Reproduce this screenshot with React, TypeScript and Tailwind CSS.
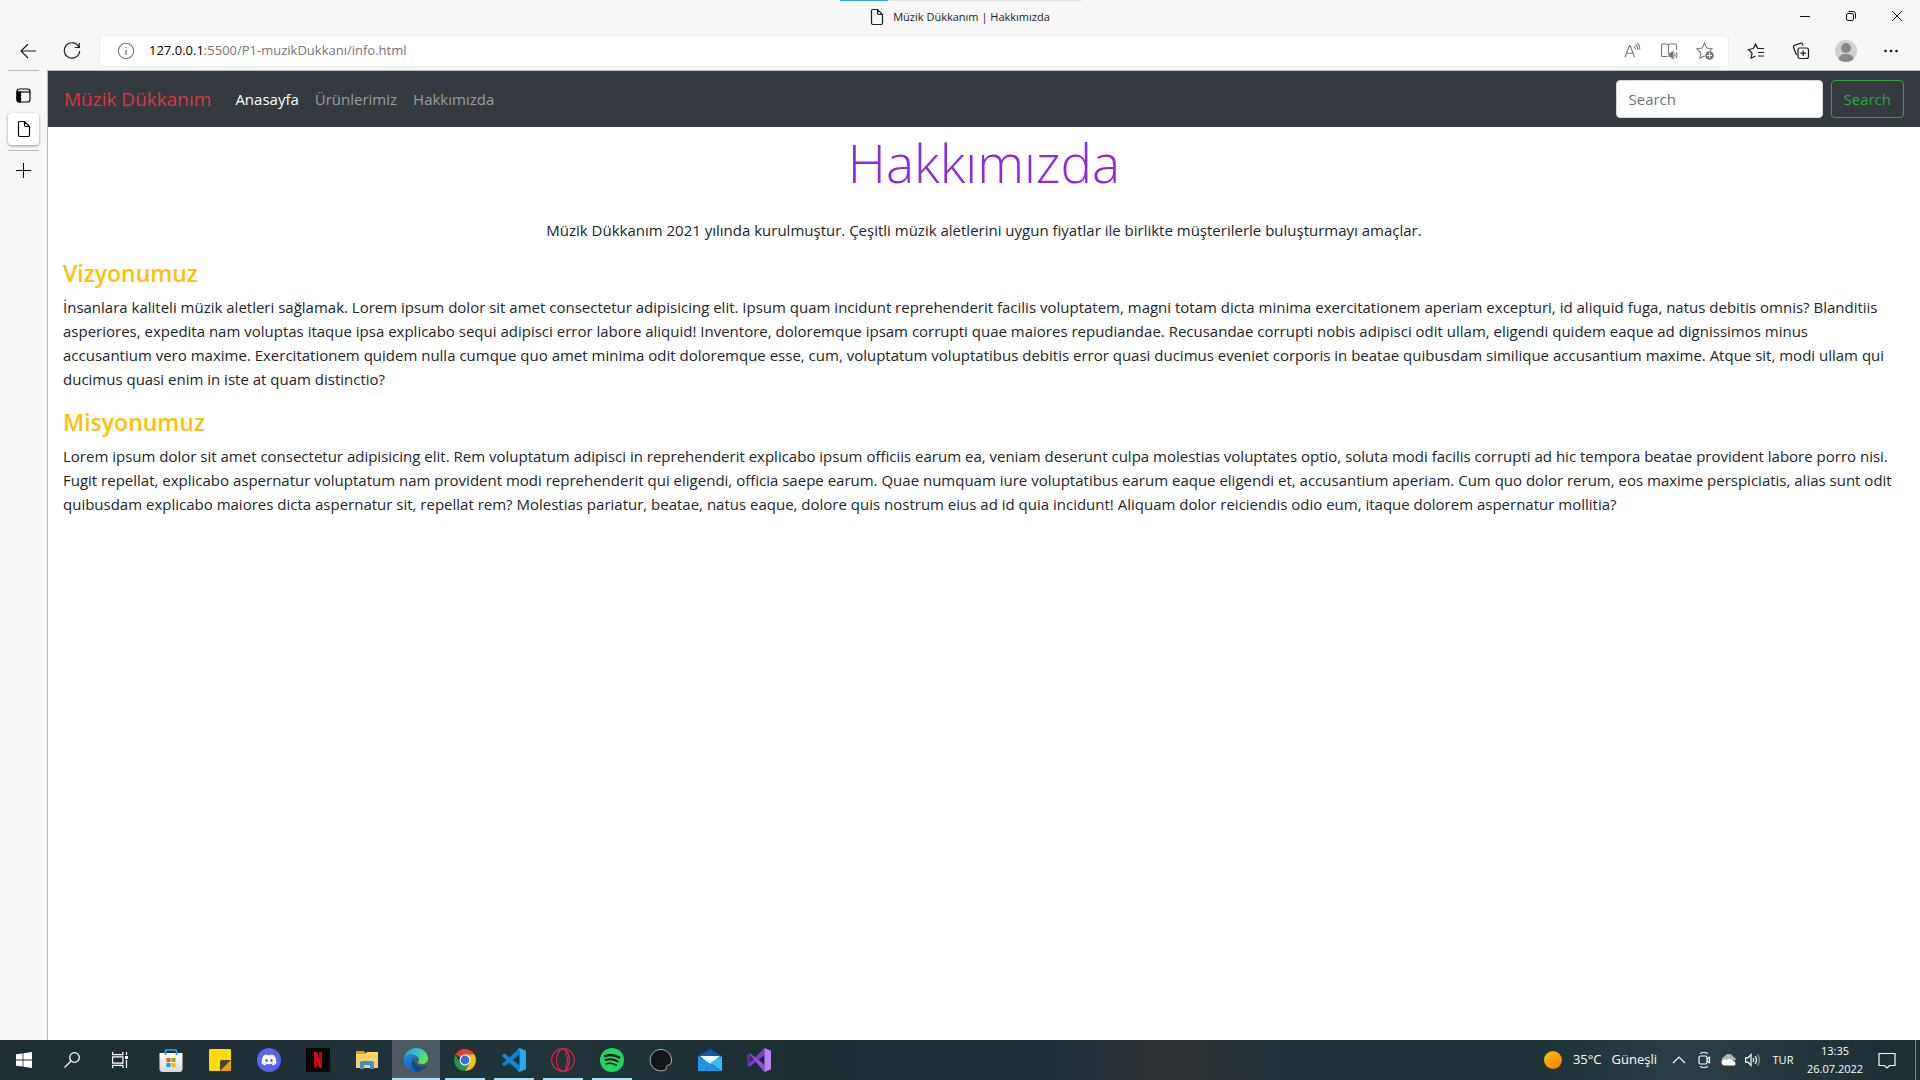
import type { ReactNode } from 'react';
import { FaDiscord } from 'react-icons/fa';

const stroke = { fill: 'none', stroke: 'currentColor', strokeWidth: 1.2 } as const;

function FileIcon() {
  return (
    <svg width="14" height="18" viewBox="0 0 14 18" {...stroke} aria-hidden="true">
      <path d="M3 1.5h4.5l5 5v8.500a1.500 1.500 0 0 1-1.500 1.500H3A1.500 1.500 0 0 1 1.500 15V3A1.500 1.500 0 0 1 3 1.500zM7.500 1.500V5A1.500 1.500 0 0 0 9 6.500h3.500" />
    </svg>
  );
}

function IconButton({ label, className, children }: { label: string; className: string; children?: ReactNode }) {
  return (
    <button type="button" aria-label={label} className={`flex shrink-0 items-center justify-center ${className}`}>
      {children}
    </button>
  );
}

function TitleBar() {
  return (
    <header className="grid h-9 grid-cols-[1fr_auto_1fr] bg-[#f7f7f7]">
      <div />
      <div className="flex w-[241px] flex-col">
        <div className="flex h-px bg-[#e3e3e3]">
          <div className="w-12 bg-[#2ba7c9]" />
        </div>
        <div className="flex h-8 items-center justify-center gap-[9px] whitespace-nowrap text-[11px] text-[#1b1b1b]">
          <FileIcon />
          <span>Müzik Dükkanım | Hakkımızda</span>
        </div>
      </div>
      <div className="flex h-8 justify-end">
        <IconButton label="Simge durumuna küçült" className="w-[46px]">
          <svg width="12" height="12" viewBox="0 0 12 12" fill="none" stroke="#111"><path d="M1 6.500h10" /></svg>
        </IconButton>
        <IconButton label="Önceki boyut" className="w-[46px]">
          <svg width="12" height="12" viewBox="0 0 12 12" fill="none" stroke="#111">
            <rect x="1.500" y="3.500" width="7" height="7" rx="1.500" />
            <path d="M3.500 1.500H8a2.500 2.500 0 0 1 2.500 2.500v4.500" />
          </svg>
        </IconButton>
        <IconButton label="Kapat" className="w-[46px]">
          <svg width="12" height="12" viewBox="0 0 12 12" fill="none" stroke="#111"><path d="M1 1l10 10M11 1L1 11" /></svg>
        </IconButton>
      </div>
    </header>
  );
}

function AddressBar() {
  return (
    <div className="flex h-[34px] items-start bg-[#f7f7f7]">
      <IconButton label="Geri" className="ml-1 h-[30px] w-12 text-[#1b1b1b]">
        <svg width="18" height="16" viewBox="0 0 18 16" {...stroke}><path d="M9 1L2 8l7 7M2 8h15" /></svg>
      </IconButton>
      <IconButton label="Yenile" className="h-[30px] w-10 text-[#1b1b1b]">
        <svg width="18" height="18" viewBox="0 0 18 18" {...stroke}><path d="M16 5.200A7.700 7.700 0 1 0 16.700 9M16.300 1v4.500h-4.500" /></svg>
      </IconButton>
      <div className="ml-2 flex h-[30px] flex-1 items-center rounded bg-white pl-[17px] shadow-[0_0_2px_rgba(0,0,0,0.12)]">
        <svg width="18" height="18" viewBox="0 0 18 18" fill="none" stroke="#767676" aria-hidden="true">
          <circle cx="9" cy="9" r="7.700" strokeWidth="1.100" />
          <path d="M9 8v5M9 5v1.300" strokeWidth="1.300" />
        </svg>
        <a href="#adres" className="ml-3.5 flex-1 text-[13px] whitespace-nowrap text-[#767676]">
          <span className="text-black">127.0.0.1</span>:5500/P1-muzikDukkanı/info.html
        </a>
        <IconButton label="Sesli oku" className="h-[30px] w-9 text-[#767676]">
          <svg width="18" height="18" viewBox="0 0 18 18" {...stroke} strokeWidth={1.1}>
            <path d="M1 15L5.500 3.500h.6l4.500 11.500M2.500 11.200h6.700M9.800 4.500q1.500 1 1.500 3M11.300 2.800q2.500 1.500 2.500 5M12.800 1q3 2 3 6.500" />
          </svg>
        </IconButton>
        <IconButton label="Okuyucu" className="h-[30px] w-9 text-[#767676]">
          <svg width="18" height="18" viewBox="0 0 18 18" {...stroke} strokeWidth={1.1}>
            <path d="M8.500 3.500q0-1.500-1.500-1.500H2.500q-1 0-1 1v10.500q0 1 1 1H7.500M8.500 3.500q0-1.500 1.500-1.500h5.500q1 0 1 1v5M8.500 3.500v8" />
            <path d="M9 11.500h1.500l2.500-2v7l-2.500-2H9z" fill="currentColor" />
            <path d="M14.500 11.500q1 1.500 0 3M16 10q2 3 0 6" />
          </svg>
        </IconButton>
        <IconButton label="Sık kullanılanlara ekle" className="mr-[5px] h-[30px] w-9 text-[#767676]">
          <svg width="20" height="20" viewBox="0 0 20 20" {...stroke} strokeWidth={1.1}>
            <path d="M9.500 15l-4.500 2 .8-5.200L2 7.800l5.200-.8L9.500 2l2.300 5 5.200.8-2.200 2" />
            <circle cx="14.500" cy="14.500" r="4.300" fill="currentColor" stroke="none" />
            <path d="M14.500 12v5M12 14.500h5" stroke="white" />
          </svg>
        </IconButton>
      </div>
      <IconButton label="Sık kullanılanlar" className="ml-[5px] h-[30px] w-[45px] text-[#1b1b1b]">
        <svg width="18" height="18" viewBox="0 0 18 18" {...stroke}>
          <path d="M10.500 6L8.500 2 6.300 6.500 1.500 7.500 5 11l-.8 5.200L8.500 14M8.500 2l2.300 4.500H17M11 10.500h6M11 14h6" />
        </svg>
      </IconButton>
      <IconButton label="Koleksiyonlar" className="h-[30px] w-[45px] text-[#1b1b1b]">
        <svg width="18" height="18" viewBox="0 0 18 18" {...stroke}>
          <rect x="6" y="6" width="10.500" height="10.500" rx="2" />
          <path d="M11.200 8.500v5.500M8.500 11.200H14M4.500 13L1.500 5.500q-.4-1.500 1-2.100L8.500 1.200q1.500-.4 2 1l.6 1.500" />
        </svg>
      </IconButton>
      <IconButton label="Profil" className="h-[30px] w-[45px]">
        <svg width="22" height="22" viewBox="0 0 22 22">
          <circle cx="11" cy="11" r="11" fill="#d2d0ce" />
          <circle cx="11" cy="8" r="5" fill="#8a8886" />
          <path d="M3.500 19q1-5 7.500-5t7.500 5Q15.500 22 11 22t-7.500-3z" fill="#8a8886" />
        </svg>
      </IconButton>
      <IconButton label="Ayarlar ve daha fazlası" className="mr-1.5 h-[30px] w-[46px]">
        <svg width="16" height="4" viewBox="0 0 16 4" fill="#111"><circle cx="2.500" cy="2" r="1.300" /><circle cx="8" cy="2" r="1.300" /><circle cx="13.500" cy="2" r="1.300" /></svg>
      </IconButton>
    </div>
  );
}

function TabRail() {
  return (
    <aside className="flex w-12 shrink-0 flex-col border-r border-[#b9b9b9] bg-[#f7f7f7] px-2 text-black">
      <div className="h-px bg-[#b9b9b9]" />
      <IconButton label="Sekme eylemleri" className="h-[42px] pt-1.5">
        <svg width="15" height="15" viewBox="0 0 15 15" fill="none" stroke="currentColor" strokeWidth="1.200">
          <rect x="1" y="1" width="13" height="13" rx="2.500" />
          <path d="M1 4h13" />
          <path d="M1 4h3.500v10H3a2 2 0 0 1-2-2z" fill="currentColor" />
        </svg>
      </IconButton>
      <IconButton label="Müzik Dükkanım | Hakkımızda" className="h-8 rounded bg-white shadow-[0_1px_3px_rgba(0,0,0,0.4)]">
        <FileIcon />
      </IconButton>
      <div className="mt-[5px] h-px bg-[#b9b9b9]" />
      <IconButton label="Yeni sekme" className="h-[38px]">
        <svg width="15" height="15" viewBox="0 0 15 15" fill="none" stroke="currentColor"><path d="M7.500 0v15M0 7.500h15" /></svg>
      </IconButton>
    </aside>
  );
}

const sectionTitle = 'mb-[7px] text-[23px] leading-[29px] font-semibold text-[#ffc107]';

function SitePage() {
  return (
    <div className="min-w-0 flex-1 border-t border-[#b9c0c0] bg-white text-[#212529]">
      <nav className="flex items-center bg-[#343a40] px-4 py-2">
        <a href="#marka" className="mr-4 text-[19px] leading-[30px] whitespace-nowrap text-[#dc3545]">Müzik Dükkanım</a>
        <div className="flex flex-1 text-[15px] leading-6 text-[#9a9da0]">
          <a href="#anasayfa" className="px-2 py-2 text-white">Anasayfa</a>
          <a href="#urunler" className="px-2 py-2">Ürünlerimiz</a>
          <a href="#hakkimizda" className="px-2 py-2">Hakkımızda</a>
        </div>
        <form className="flex gap-2 text-[15px] leading-6" onSubmit={(e) => e.preventDefault()}>
          <input type="search" aria-label="Search" placeholder="Search" className="h-[38px] w-[207px] rounded border border-[#ced4da] bg-white px-3 placeholder:text-[#6c757d]" />
          <button type="submit" className="h-[38px] rounded border border-[#28a745] px-3 text-[#28a745]">Search</button>
        </form>
      </nav>
      <main className="px-[15px] pt-0.5 text-[15px] leading-6">
        <h1 className="mb-[22px] text-center text-[53px] leading-[67px] font-light text-[#8a2be2]">Hakkımızda</h1>
        <p className="mb-[17px] text-center">
          Müzik Dükkanım 2021 yılında kurulmuştur. Çeşitli müzik aletlerini uygun fiyatlar ile birlikte müşterilerle buluşturmayı amaçlar.
        </p>
        <h2 className={sectionTitle}>Vizyonumuz</h2>
        <p className="mb-[17px]">
          İnsanlara kaliteli müzik aletleri sağlamak. Lorem ipsum dolor sit amet consectetur adipisicing elit. Ipsum quam incidunt reprehenderit facilis voluptatem, magni totam dicta minima exercitationem aperiam excepturi, id aliquid fuga, natus debitis omnis? Blanditiis asperiores, expedita nam voluptas itaque ipsa explicabo sequi adipisci error labore aliquid! Inventore, doloremque ipsam corrupti quae maiores repudiandae. Recusandae corrupti nobis adipisci odit ullam, eligendi quidem eaque ad dignissimos minus
          <br />
          accusantium vero maxime. Exercitationem quidem nulla cumque quo amet minima odit doloremque esse, cum, voluptatum voluptatibus debitis error quasi ducimus eveniet corporis in beatae quibusdam similique accusantium maxime. Atque sit, modi ullam qui
          <br />
          ducimus quasi enim in iste at quam distinctio?
        </p>
        <h2 className={sectionTitle}>Misyonumuz</h2>
        <p>
          Lorem ipsum dolor sit amet consectetur adipisicing elit. Rem voluptatum adipisci in reprehenderit explicabo ipsum officiis earum ea, veniam deserunt culpa molestias voluptates optio, soluta modi facilis corrupti ad hic tempora beatae provident labore porro nisi. Fugit repellat, explicabo aspernatur voluptatum nam provident modi reprehenderit qui eligendi, officia saepe earum. Quae numquam iure voluptatibus earum eaque eligendi et, accusantium aperiam. Cum quo dolor rerum, eos maxime perspiciatis, alias sunt odit quibusdam explicabo maiores dicta aspernatur sit, repellat rem? Molestias pariatur, beatae, natus eaque, dolore quis nostrum eius ad id quia incidunt! Aliquam dolor reiciendis odio eum, itaque dolorem aspernatur mollitia?
        </p>
      </main>
    </div>
  );
}

const apps: { name: string; state?: 'active' | 'open'; icon: ReactNode }[] = [
  {
    name: 'Microsoft Store',
    icon: (
      <svg width="24" height="24" viewBox="0 0 24 24">
        <defs><linearGradient id="bag" x1="0" y1="0" x2="0" y2="1"><stop offset="0" stopColor="#fff" /><stop offset="1" stopColor="#d8d8d8" /></linearGradient></defs>
        <path d="M.5 5h23v16a3 3 0 0 1-3 3h-17a3 3 0 0 1-3-3z" fill="url(#bag)" />
        <path d="M6.500 7V3q0-1.200 1.200-1.200h8.600q1.200 0 1.200 1.200v4" fill="none" stroke="#1aa0e6" strokeWidth="1.800" />
        <path d="M7.500 10h4v4h-4z" fill="#f25022" /><path d="M12.500 10h4v4h-4z" fill="#7fba00" />
        <path d="M7.500 15h4v4h-4z" fill="#00a4ef" /><path d="M12.500 15h4v4h-4z" fill="#ffb900" />
      </svg>
    ),
  },
  {
    name: 'Yapışkan Notlar',
    icon: (
      <svg width="24" height="24" viewBox="0 0 24 24">
        <path d="M2 1h20a1 1 0 0 1 1 1v20a1 1 0 0 1-1 1H2a1 1 0 0 1-1-1V2a1 1 0 0 1 1-1z" fill="#ffd90a" />
        <path d="M23 12v10a1 1 0 0 1-1 1H12z" fill="#e9a400" /><path d="M12 23v-9q0-2 2-2h9z" fill="#454545" />
      </svg>
    ),
  },
  {
    name: 'Discord',
    icon: <span className="flex size-6 items-center justify-center rounded-full bg-[#5865f2]"><FaDiscord className="size-4 text-white" /></span>,
  },
  {
    name: 'Netflix',
    icon: (
      <svg width="24" height="24" viewBox="0 0 24 24">
        <path d="M0 0h24v24H0z" fill="#000" /><path d="M8 4h3v15.600L8 20zM13 4h3v16l-3-.4z" fill="#b1060f" /><path d="M8 4h3l5 16-3-.4z" fill="#e50914" />
      </svg>
    ),
  },
  {
    name: 'Dosya Gezgini',
    icon: (
      <svg width="24" height="24" viewBox="0 0 24 24">
        <path d="M1 3h8l2 3H1z" fill="#e3a008" /><path d="M1 6h9l2-2h11v16H1z" fill="#ffd869" />
        <path d="M1 7h22v13H1z" fill="#fbd064" /><path d="M5 21v-6q0-2 2-2h10q2 0 2 2v6h-4v-4H9v4z" fill="#3a91dc" />
      </svg>
    ),
  },
  {
    name: 'Microsoft Edge',
    state: 'active',
    icon: (
      <svg width="24" height="24" viewBox="0 0 24 24">
        <defs>
          <linearGradient id="edgeTop" x1="0" y1="0" x2="1" y2=".5"><stop offset="0" stopColor="#2491dd" /><stop offset=".5" stopColor="#2cc5cf" /><stop offset="1" stopColor="#62e25d" /></linearGradient>
          <linearGradient id="edgeLow" x1="0" y1="0" x2=".8" y2="1"><stop offset="0" stopColor="#1d8fe2" /><stop offset="1" stopColor="#0d5cad" /></linearGradient>
        </defs>
        <path d="M0 11.500C.4 5 5.500 0 12 0c7 0 12 5 12 10.500 0 4-3 5.500-5.800 5.500-3 0-4.700-1-4.200-2 .6-.8 1.200-1.500.8-3C14 8 10.500 6.500 7.500 6.500 4 6.500 1 8.500 0 11.500z" fill="url(#edgeTop)" />
        <path d="M0 11.500c1-3.500 4-5 7.500-5 2.500 0 5 1 6.300 2.500C10.500 8.500 8 11 8 15c0 4.500 3.300 8 8 8.300-1.200.5-2.600.7-4 .7C5 24 0 18.500 0 11.500z" fill="url(#edgeLow)" />
        <path d="M9.500 10.500c-3 3-2.500 10.500 3.500 13 4.500.2 8-2.500 9.700-5.300.2-.5-.2-.7-.6-.5-5 2.300-11.500.8-12.600-7.200z" fill="#114a8b" />
      </svg>
    ),
  },
  {
    name: 'Google Chrome',
    state: 'open',
    icon: (
      <svg width="24" height="24" viewBox="0 0 24 24">
        <path d="M12 12L2.500 6.500A11 11 0 0 1 21.500 6.500z" fill="#ea4335" />
        <path d="M12 12V6.500h9.500A11 11 0 0 1 12 23l4.800-8.300z" fill="#fbc116" />
        <path d="M12 12l4.800 2.700L12 23A11 11 0 0 1 2.500 6.500L7.200 14.700z" fill="#279847" />
        <circle cx="12" cy="12" r="5.500" fill="#fff" /><circle cx="12" cy="12" r="4.400" fill="#2a73e8" />
      </svg>
    ),
  },
  {
    name: 'Visual Studio Code',
    state: 'open',
    icon: (
      <svg width="24" height="24" viewBox="0 0 24 24">
        <path d="M17.500 0v6.500L3 18.200l-1 .1-1.700-1.500v-1z" fill="#0f7fc9" />
        <path d="M17.500 24v-6.500L3 5.800l-1-.1L.3 7.200v1z" fill="#1088d8" />
        <path d="M17.500 0L24 2.700v18.600L17.500 24l-1.500-1.500 1.500-1V2.500L16 1.500z" fill="#2ba6f3" />
      </svg>
    ),
  },
  {
    name: 'Opera GX',
    state: 'open',
    icon: (
      <svg width="24" height="24" viewBox="0 0 24 24" fill="none" stroke="#e0234e" strokeWidth="1.200">
        <circle cx="12" cy="12" r="11.300" /><ellipse cx="12" cy="12" rx="6.500" ry="11" /><path d="M14 2.500q4.500 3 4.500 9.500T14 21.500" /><path d="M14.500 5q2 3 2 7t-2 7" />
      </svg>
    ),
  },
  {
    name: 'Spotify',
    state: 'open',
    icon: (
      <svg width="24" height="24" viewBox="0 0 24 24" fill="none" stroke="#0b1012" strokeLinecap="round">
        <circle cx="12" cy="12" r="12" fill="#1ed760" stroke="none" />
        <path d="M5 8q7.500-2.200 14.300 1.500" strokeWidth="2.300" /><path d="M5.500 12q6.500-1.800 12.300 1.500" strokeWidth="2" /><path d="M6 15.700q5.500-1.400 10.300 1.400" strokeWidth="1.600" />
      </svg>
    ),
  },
  {
    name: 'Uygulama',
    icon: (
      <svg width="24" height="24" viewBox="0 0 24 24">
        <path d="M22.500 12A10.700 10.700 0 1 0 17 21.500c.8-.6-.2-2 .5-3.300 1-1.800 3.200-.8 4-2 .8-1.200 1-2.500 1-4.200z" fill="#14171a" stroke="#aeb3b5" strokeWidth="1" />
      </svg>
    ),
  },
  {
    name: 'Posta',
    icon: (
      <svg width="24" height="24" viewBox="0 0 24 24">
        <path d="M0 8l12-7 12 7v2H0z" fill="#0a5ba8" /><path d="M2 8h20L12 17z" fill="#f4f4f4" />
        <path d="M0 8l12 7.500L24 23H0z" fill="#1b95e5" /><path d="M24 8v15L12 15z" fill="#32bdf2" />
      </svg>
    ),
  },
  {
    name: 'Visual Studio',
    icon: (
      <svg width="24" height="24" viewBox="0 0 24 24">
        <path d="M0 6.500L2 5.500 3.500 6v12l-1.500.5-2-1z" fill="#5b2a9c" />
        <path d="M17.500 0v7L4 17.800l-2 .7L.5 17z" fill="#7a3fc4" />
        <path d="M2 5.500l2 .5 13.500 11V24z" fill="#9450dc" />
        <path d="M17.500 0L24 2.700v18.600L17.500 24z" fill="#b884f5" />
      </svg>
    ),
  },
];

const barStyles = { active: 'w-12 bg-[#a7e3fa]', open: 'w-10 bg-[#a7e3fa]' };

function Taskbar() {
  return (
    <footer className="flex h-10 shrink-0 bg-[linear-gradient(90deg,#1e2e33_0%,#203439_30%,#1c2e32_42%,#20303a_55%,#2f3234_61%,#23323a_67%,#1e3338_80%,#2a3f45_88%,#21343a_95%,#1e2e33_100%)] text-white">
      <IconButton label="Başlat" className="w-12">
        <svg width="16" height="16" viewBox="0 0 16 16" fill="#fff"><path d="M0 2.300L6.600 1.400v6.200H0zM7.400 1.300L16 0v7.600H7.400zM0 8.400h6.600v6.200L0 13.700zM7.400 8.400H16V16l-8.600-1.300z" /></svg>
      </IconButton>
      <IconButton label="Ara" className="w-12">
        <svg width="16" height="16" viewBox="0 0 16 16" fill="none" stroke="#fff" strokeWidth="1.300"><circle cx="10.500" cy="5.500" r="4.800" /><path d="M7 9L.5 15.500" /></svg>
      </IconButton>
      <IconButton label="Görev görünümü" className="w-12">
        <svg width="16" height="16" viewBox="0 0 16 16" fill="none" stroke="#fff" strokeWidth="1.200">
          <path d="M.6 0v2.600h10.300V0M.6 16v-2.600h10.300V16M.6 4.800h10.300v6.400H.6zM14.500 0v3M14.500 8v8" /><path d="M13 4h3v3h-3z" fill="#fff" stroke="none" />
        </svg>
      </IconButton>
      <div className="ml-[3px] flex flex-1 gap-px">
        {apps.map((app) => (
          <button
            key={app.name}
            type="button"
            aria-label={app.name}
            className={app.state === 'active' ? 'flex w-12 flex-col items-center bg-[#4c5b60]' : 'flex w-12 flex-col items-center'}
          >
            <span className="mt-2 flex h-[30px] items-start">{app.icon}</span>
            {app.state && <span className={`h-0.5 ${barStyles[app.state]}`} />}
          </button>
        ))}
      </div>
      <button type="button" className="mr-2 flex items-center text-[13px] whitespace-nowrap">
        <span className="mr-[11px] size-[18px] rounded-full bg-linear-to-br from-[#ffc20a] to-[#ee7a05]" />
        <span className="mr-2.5">35°C</span>
        <span>Güneşli</span>
      </button>
      <IconButton label="Gizli simgeleri göster" className="w-7">
        <svg width="14" height="8" viewBox="0 0 14 8" {...stroke}><path d="M1 7l6-6 6 6" /></svg>
      </IconButton>
      <IconButton label="Şimdi Toplantı" className="w-6">
        <svg width="14" height="18" viewBox="0 0 14 18" {...stroke}><rect x="1" y="5" width="8" height="8" rx="1.500" /><path d="M9 8l2.500-1.700v5.400L9 10M2 2.500q4-2 8 0M2 15.500q4 2 8 0" /></svg>
      </IconButton>
      <IconButton label="OneDrive" className="w-6">
        <svg width="16" height="12" viewBox="0 0 16 12"><path d="M1 8a4 4 0 0 1 2.500-5.500A5 5 0 0 1 12.500 3a3 3 0 0 1 2.500 3z" fill="#aeb6b8" /><path d="M3 11.500a3 3 0 0 1-.5-5.800q1.500-.5 3 .3A5 5 0 0 1 12.500 7a2.500 2.500 0 0 1 1 4.500z" fill="#fff" /></svg>
      </IconButton>
      <IconButton label="Hoparlör" className="w-6">
        <svg width="16" height="14" viewBox="0 0 16 14" {...stroke}><path d="M.6 4.800H3L6 1.500v11L3 9.200H.6zM8 5q1.300 2 0 4M10.200 3.200q2.500 3.800 0 7.600" /><path d="M12.500 1.500q4 5.500 0 11" opacity=".5" /></svg>
      </IconButton>
      <button type="button" className="flex w-9 items-center justify-center text-[11px]">TUR</button>
      <button type="button" className="flex w-[68px] flex-col items-center justify-center text-[11px] leading-[18px]">
        <span>13:35</span>
        <span>26.07.2022</span>
      </button>
      <IconButton label="Bildirimler" className="w-9">
        <svg width="18" height="18" viewBox="0 0 18 18" {...stroke}><path d="M1 2.500h16v12h-5.500L9 17l-2.500-2.500H1z" /></svg>
      </IconButton>
      <IconButton label="Masaüstünü göster" className="ml-2.5 w-[5px] border-l border-[#7b888c]" />
    </footer>
  );
}

export default function App() {
  return (
    <div className="flex min-h-screen flex-col bg-white font-['Open_Sans','Noto_Sans',sans-serif]">
      <TitleBar />
      <AddressBar />
      <div className="flex flex-1">
        <TabRail />
        <SitePage />
      </div>
      <Taskbar />
    </div>
  );
}
